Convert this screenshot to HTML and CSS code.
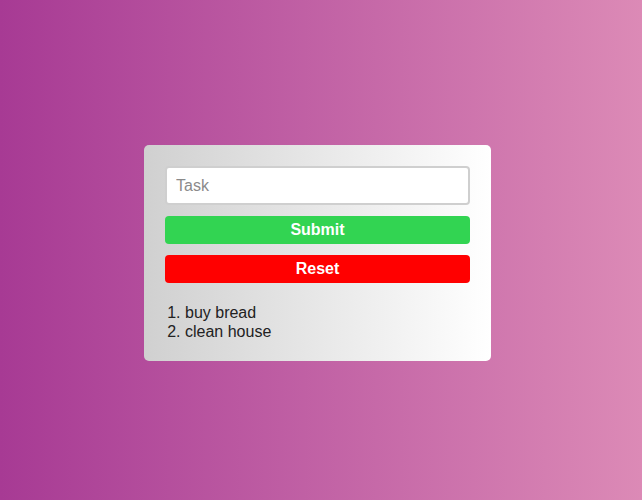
FILE: index.html
```html
<!DOCTYPE html>
<html>
<head>
<meta charset="utf-8">
<link rel="stylesheet" href="styles.css">
</head>
<body>
<div class="page">
  <div class="card">
    <input class="task-input" type="text" placeholder="Task">
    <button class="btn btn-submit">Submit</button>
    <button class="btn btn-reset">Reset</button>
    <ol class="tasks">
      <li>buy bread</li>
      <li>clean house</li>
    </ol>
  </div>
</div>
</body>
</html>
```
FILE: styles.css
```css
html, body {
  margin: 0;
  padding: 0;
}
body {
  font-family: "Liberation Sans", Arial, sans-serif;
  background: linear-gradient(to right, #a73a94, #dc8ab6);
  min-height: 500px;
}
.page {
  min-height: 500px;
  display: flex;
  align-items: flex-start;
  justify-content: center;
  padding-top: 145px;
  box-sizing: border-box;
}
.card {
  width: 347px;
  box-sizing: border-box;
  padding: 21px 21px 20px 21px;
  border-radius: 5px;
  background: linear-gradient(to right, #d0d0d0, #ffffff);
  display: flex;
  flex-direction: column;
  margin-left: -7px;
}
.task-input {
  height: 39px;
  box-sizing: border-box;
  border: 2px solid #cfcfcf;
  border-radius: 4px;
  padding: 0 9px;
  font-family: "Liberation Sans", Arial, sans-serif;
  font-size: 16px;
  color: #222;
  background: #fff;
  outline: none;
}
.task-input::placeholder {
  color: #8a8a8a;
}
.btn {
  height: 28px;
  border: none;
  border-radius: 4px;
  color: #fff;
  font-family: "Liberation Sans", Arial, sans-serif;
  font-weight: bold;
  font-size: 16px;
  padding: 0;
}
.btn-submit {
  margin-top: 11px;
  background: #32d452;
}
.btn-reset {
  margin-top: 11px;
  background: #ff0000;
}
.tasks {
  margin: 20px 0 0 0;
  padding-left: 20px;
  font-size: 16px;
  line-height: 19px;
  color: #222;
}
```
